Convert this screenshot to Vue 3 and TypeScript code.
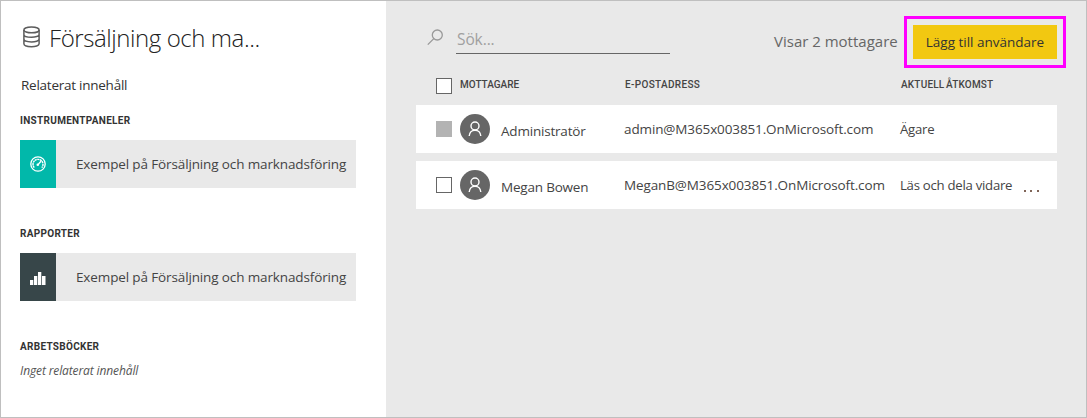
<script setup lang="ts">
interface Section {
  heading: string
  item?: string
  icon?: 'gauge' | 'bars'
}
interface Recipient {
  name: string
  email: string
  access: string
  locked: boolean
}

const sections: Section[] = [
  { heading: 'INSTRUMENTPANELER', item: 'Exempel på Försäljning och marknadsföring', icon: 'gauge' },
  { heading: 'RAPPORTER', item: 'Exempel på Försäljning och marknadsföring', icon: 'bars' },
  { heading: 'ARBETSBÖCKER' },
]
const recipients: Recipient[] = [
  { name: 'Administratör', email: 'admin@M365x003851.OnMicrosoft.com', access: 'Ägare', locked: true },
  { name: 'Megan Bowen', email: 'MeganB@M365x003851.OnMicrosoft.com', access: 'Läs och dela vidare', locked: false },
]
</script>

<template>
  <div class="page">
    <aside class="side">
      <header class="title">
        <svg class="db" width="17" height="22" viewBox="0 0 17 22" fill="none" stroke="#5c5c5c" stroke-width="1.5">
          <ellipse cx="8.5" cy="3.9" rx="7.6" ry="2.9" />
          <path d="M.9 3.9V17.8C.9 21.6 16.1 21.6 16.1 17.8V3.9M.9 8.5C.9 12.2 16.1 12.2 16.1 8.5M.9 13.1C.9 16.8 16.1 16.8 16.1 13.1" />
        </svg>
        <h1>Försäljning och ma...</h1>
      </header>
      <p class="related">Relaterat innehåll</p>
      <section v-for="s in sections" :key="s.heading" class="section">
        <h2>{{ s.heading }}</h2>
        <div v-if="s.item" class="tile">
          <div class="tile-icon" :class="s.icon">
            <svg v-if="s.icon === 'gauge'" width="16" height="16" viewBox="0 0 16 16" fill="none" stroke="#fff">
              <circle cx="8" cy="8" r="7.2" stroke-width="1.3" />
              <path d="M4.2 11.6A5 5 0 1 1 11.8 11.6" stroke-width="1.4" stroke-dasharray="2.1 .5" />
              <path d="M8 8.6 11 5.2" stroke-width="1.4" />
              <circle cx="7.8" cy="8.8" r="1.3" fill="#fff" stroke="none" />
            </svg>
            <svg v-else width="16" height="16" viewBox="0 0 16 16" fill="#fff">
              <path d="M0 11h3.3v5H0zM4 7h3.3v9H4zM8 3h3.3v13H8zM12 7h3.5v9H12z" />
            </svg>
          </div>
          <span>{{ s.item }}</span>
        </div>
        <p v-else class="empty">Inget relaterat innehåll</p>
      </section>
    </aside>

    <main class="main">
      <div class="toolbar">
        <svg class="lens" width="17" height="17" viewBox="0 0 17 17" fill="none" stroke="#999" stroke-width="1.3">
          <circle cx="10.3" cy="6" r="5" />
          <path d="M6.8 9.6.8 15.6" />
        </svg>
        <div class="search">Sök...</div>
        <span class="count">Visar 2 mottagare</span>
        <div class="highlight"><button type="button">Lägg till användare</button></div>
      </div>

      <div class="row head">
        <span class="check"></span>
        <span class="h-name">MOTTAGARE</span>
        <span class="h-mail">E-POSTADRESS</span>
        <span class="h-access">AKTUELL ÅTKOMST</span>
      </div>

      <div v-for="r in recipients" :key="r.email" class="row card">
        <span class="check" :class="{ locked: r.locked }"></span>
        <span class="avatar">
          <svg width="14" height="16" viewBox="0 0 14 16" fill="none" stroke="#fff" stroke-width="1.4">
            <circle cx="7" cy="5" r="4" />
            <path d="M1.2 15C1.4 11.6 3.8 9.2 7 9.2S12.6 11.6 12.8 15" />
          </svg>
        </span>
        <span class="name">{{ r.name }}</span>
        <span class="mail">{{ r.email }}</span>
        <span class="access">{{ r.access }}</span>
        <span v-if="!r.locked" class="more"><i></i><i></i><i></i></span>
      </div>
    </main>
  </div>
</template>

<style>
html, body { margin: 0; }
</style>

<style scoped>
.page {
  box-sizing: border-box;
  width: 1087px;
  height: 418px;
  display: flex;
  border: 1px solid #bfbfbf;
  background: #e9e9e9;
  color: #333;
  font: 370 13.5px/20px "Open Sans", "Noto Sans", sans-serif;
  white-space: nowrap;
}
h1, h2, p { margin: 0; font-weight: inherit; }

.side { box-sizing: border-box; width: 385px; padding: 20px 30px 0 19px; background: #fff; flex: none; }
.title { display: flex; height: 34px; }
.db { margin: 5px 9px 0 3px; flex: none; }
h1 { font-size: 24px; font-weight: 300; line-height: 33px; letter-spacing: -.42px; color: #222; }
.related { margin-top: 20px; letter-spacing: -.25px; padding-left: 1px; }
.section { height: 113px; padding-top: 13px; box-sizing: border-box; }
.section:last-child { height: auto; }
.related + .section { margin-top: 6px; }
h2, .head { font: 500 10px/14px Roboto, sans-serif; letter-spacing: 0; }
h2 { font-weight: 700; letter-spacing: .3px; }
.tile { display: flex; align-items: center; margin-top: 12px; width: 336px; height: 48px; background: #e9e9e9; color: #444; }
.tile span { padding-left: 20px; letter-spacing: -.13px; }
.tile-icon { width: 36px; height: 48px; flex: none; display: flex; align-items: center; justify-content: center; }
.gauge { background: #01b8aa; }
.bars { background: #374649; }
.empty { margin-top: 8px; font-size: 12px; font-style: italic; line-height: 18px; letter-spacing: -.12px; color: #555; }

.main { flex: 1; padding: 14px 20px 0 30px; }
.toolbar { display: flex; height: 54px; }
.lens { margin: 14px 0 0 11px; }
.search { width: 214px; height: 38px; box-sizing: border-box; border-bottom: 1px solid #666; margin-left: 12px; margin-top: 1px; padding: 12px 1px 0; font-size: 15.5px; line-height: 22px; letter-spacing: -.1px; color: #a0a0a0; }
.count { margin: 15px 0 0 104px; width: 124px; font-size: 15px; line-height: 22px; color: #666; }
.highlight { box-sizing: border-box; width: 162px; height: 52px; border: 3px solid #f0f; padding: 6px; margin: 1px 0 0 6px; flex: none; }
button { display: block; width: 144px; height: 34px; padding: 0; border: 0; background: #f2c811; color: #333; font: 370 13.5px/34px "Open Sans", sans-serif; }

.row { width: 641px; box-sizing: border-box; display: grid; grid-template-columns: 16px 49px 116px 276px 122px 1fr; padding-left: 20px; }
.head { height: 36px; color: #444; align-items: start; padding-top: 9px; grid-template-columns: 24px 165px 276px 1fr; }
.h-mail { letter-spacing: .33px; }
.h-access { letter-spacing: .2px; word-spacing: -1.2px; }
.check { box-sizing: border-box; width: 16px; height: 16px; border: 1px solid #666; background: #fff; }
.locked { background: #b3b3b3; border-color: #b3b3b3; }
.card { height: 48px; background: #fff; margin-bottom: 8px; align-items: center; color: #444; }
.avatar { width: 30px; height: 30px; margin-left: 8px; border-radius: 50%; background: #666; display: flex; align-items: center; justify-content: center; }
.name { margin-top: 4px; letter-spacing: -.2px; }
.mail { margin-left: 7px; letter-spacing: -.12px; }
.access { margin-left: 7px; font-size: 13.2px; letter-spacing: -.27px; }
.more { display: flex; gap: 4.5px; margin: 12px 0 0 8.5px; }
.more i { width: 2px; height: 2px; background: #806558; }
</style>
